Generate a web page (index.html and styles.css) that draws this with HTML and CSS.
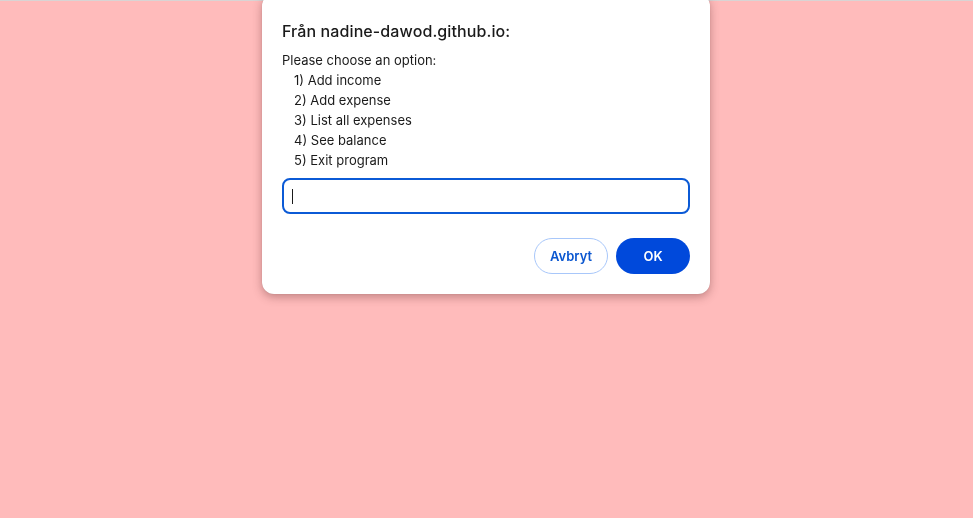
FILE: index.html
```html
<!DOCTYPE html>
<html lang="sv">
<head>
<meta charset="utf-8">
<title>Budget</title>
<link rel="stylesheet" href="styles.css">
</head>
<body>
<div class="topline"></div>
<div class="dialog" role="dialog">
  <h1 class="title">Från nadine-dawod.github.io:</h1>
  <div class="message">
    <div>Please choose an option:</div>
    <div class="opt">1) Add income</div>
    <div class="opt">2) Add expense</div>
    <div class="opt">3) List all expenses</div>
    <div class="opt">4) See balance</div>
    <div class="opt">5) Exit program</div>
  </div>
  <div class="field"><span class="caret"></span></div>
  <div class="actions">
    <button class="btn btn-cancel">Avbryt</button>
    <button class="btn btn-ok">OK</button>
  </div>
</div>
</body>
</html>
```

FILE: styles.css
```css
html, body {
  margin: 0;
  height: 100%;
}
body {
  background: #ffbbbb;
  font-family: Inter, "Noto Sans", sans-serif;
  color: #1a1a1a;
}
.topline {
  height: 1px;
  background: #d9d4d4;
}
.dialog {
  position: fixed;
  top: -6px;
  left: 262px;
  width: 448px;
  box-sizing: border-box;
  padding: 27px 20px 20px;
  background: #fff;
  border-radius: 12px;
  box-shadow: 0 3px 10px rgba(90, 40, 40, 0.38), 0 0 1px rgba(0,0,0,0.2);
  display: flex;
  flex-direction: column;
}
.title {
  margin: 0;
  font-size: 16px;
  line-height: 20px;
  font-weight: 500;
  letter-spacing: 0.1px;
  color: #1a1a1a;
}
.message {
  margin-top: 9px;
  font-size: 13px;
  line-height: 20px;
  color: #1a1a1a;
}
.opt {
  padding-left: 12px;
}
.field {
  margin-top: 8px;
  height: 36px;
  box-sizing: border-box;
  border: 2px solid #0b5ad6;
  border-radius: 8px;
  display: flex;
  align-items: center;
  padding-left: 8px;
}
.caret {
  width: 1px;
  height: 15px;
  background: #1a1a1a;
}
.actions {
  margin-top: 24px;
  display: flex;
  justify-content: flex-end;
  gap: 8px;
}
.btn {
  width: 74px;
  height: 36px;
  border-radius: 18px;
  font-family: Inter, "Noto Sans", sans-serif;
  font-size: 13px;
  font-weight: 600;
  cursor: pointer;
}
.btn-cancel {
  background: #fff;
  color: #0b57d0;
  border: 1px solid #a8c7fa;
}
.btn-ok {
  background: #0049db;
  color: #fff;
  border: none;
}
```
